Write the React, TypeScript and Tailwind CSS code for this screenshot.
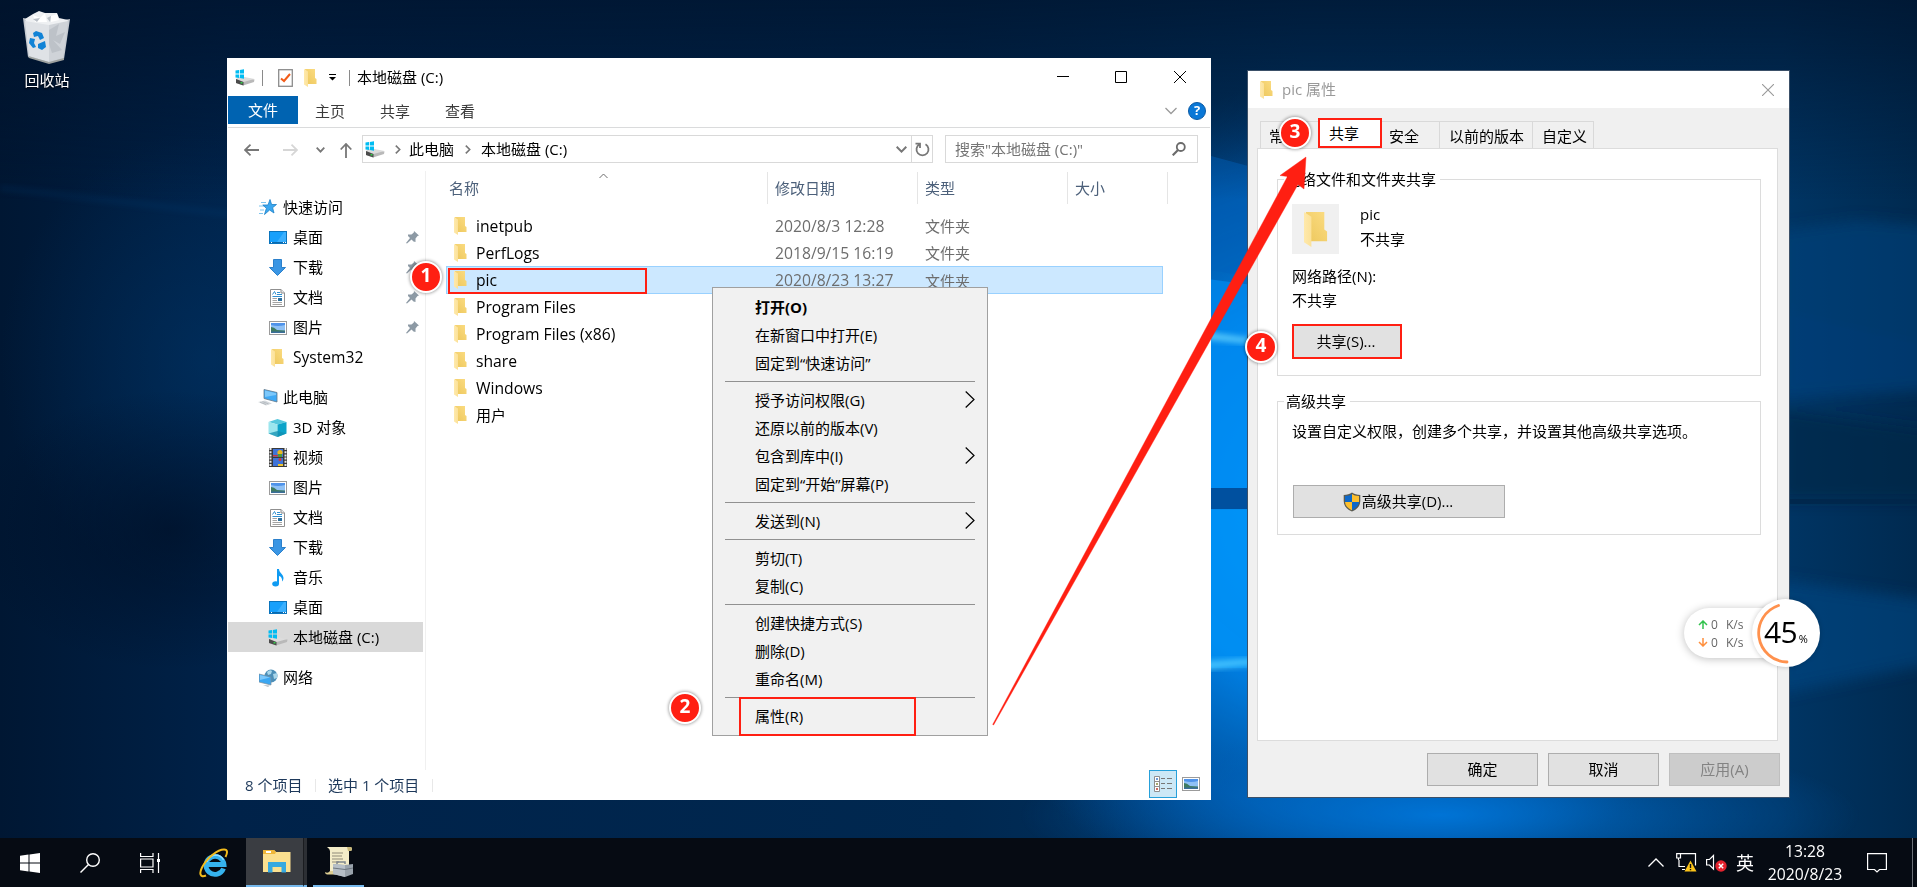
import type { ReactNode } from 'react';
import clsx from 'clsx';

interface IconProps {
  className?: string;
}

/* ---------- Icons ---------- */

function FolderIcon({ className = 'w-[13px] h-[18px]' }: IconProps) {
  return (
    <svg className={className} viewBox="0 0 26 36" preserveAspectRatio="none">
      <defs>
        <linearGradient id="folderBack" x1="0" y1="1" x2="1" y2="0">
          <stop offset="0" stopColor="#edc75c" />
          <stop offset="1" stopColor="#fbdc82" />
        </linearGradient>
        <linearGradient id="folderFront" x1="0" y1="0" x2="1" y2="0">
          <stop offset="0" stopColor="#ffe9ab" />
          <stop offset="1" stopColor="#fbe199" />
        </linearGradient>
      </defs>
      <path d="M2 0H22V18L25 20V30H6Z" fill="url(#folderBack)" />
      <path d="M0 0L8 5V36L0 31Z" fill="url(#folderFront)" />
    </svg>
  );
}

function DriveIcon({ className }: IconProps) {
  return (
    <svg className={clsx('w-5 h-[17px] shrink-0', className)} viewBox="0 0 20 17">
      <path d="M1 10L6 8L19.500 10.500L19 13L8 16.500L1 14Z" fill="#b9b9b9" />
      <path d="M1 10L7 7.500L19.500 10L8.500 13Z" fill="#dcdcdc" />
      <path d="M1 10L8.500 13V16.500L1 14Z" fill="#4b4b4b" />
      <rect x="5.500" y="13" width="2" height="1.500" fill="#35d04a" />
      <path d="M0.500 1.500L4 1V4.500H0.500ZM4.800 0.900L9 0.300V4.500H4.800ZM0.500 5.400H4V9L0.500 8.500ZM4.800 5.400H9V9.700L4.800 9.100Z" fill="#00bcf2" />
    </svg>
  );
}

function StarIcon() {
  return (
    <svg className="w-[18px] h-[17px]" viewBox="0 0 18 17">
      <path d="M2 3.500H7M0 7H5M1 11H5M0 14.500H4" stroke="#7cc4ee" strokeWidth="1" />
      <path d="M11 0.500L12.600 5.500H17.500L13.600 8.700L15 14L10.600 11L5.500 15.500L7.400 9.300L3.800 6H9Z" fill="#3ba7ef" stroke="#1b7fc6" strokeWidth=".8" />
    </svg>
  );
}

function DesktopIcon() {
  return (
    <svg className="w-[18px] h-[13px]" viewBox="0 0 18 13">
      <rect x=".5" y=".5" width="17" height="12" fill="#18a0fb" stroke="#0a74bd" />
      <path d="M8 11L15 1H17V11Z" fill="#3bb0ff" />
      <path d="M1 11.500H17" stroke="#0b69ac" />
      <path d="M2 11.500H3M14 11.500H15M16 11.500H17" stroke="#fff" />
    </svg>
  );
}

function DownloadIcon() {
  return (
    <svg className="w-[17px] h-[17px]" viewBox="0 0 17 17">
      <path d="M4.500 .5H12.500V8.500H16.500L8.500 16.500L.5 8.500H4.500Z" fill="#3a96e4" stroke="#2b80cb" />
    </svg>
  );
}

function DocumentIcon() {
  return (
    <svg className="w-[15px] h-[18px]" viewBox="0 0 15 18">
      <path d="M.5 .5H11L14.500 4V17.500H.5Z" fill="#fff" stroke="#8f8f8f" />
      <path d="M11 .5V4H14.500" fill="#e6e6e6" stroke="#8f8f8f" />
      <path d="M2.500 5.500L4.500 2.500L6 5.500M7 3.500H10M2.500 7.500H12M7 5.500H12" stroke="#2f8fd0" fill="none" />
      <path d="M2.500 9.500H7M2.500 11.500H7M2.500 13.500H12M2.500 15.500H12" stroke="#a3a3a3" />
      <rect x="8" y="9" width="4" height="3" fill="#2c6f9f" />
    </svg>
  );
}

function PictureIcon() {
  return (
    <svg className="w-[18px] h-[14px]" viewBox="0 0 18 14">
      <rect x=".5" y=".5" width="17" height="13" fill="#fff" stroke="#9b9b9b" />
      <rect x="2" y="2" width="14" height="10" fill="#8fc1f5" />
      <path d="M2 2H16V4Q9 6 2 4Z" fill="#4f93ea" />
      <path d="M2 6Q5 6 8 9L16 9.500V12H2Z" fill="#3f7b62" />
      <path d="M2 10.500H16V12H2Z" fill="#3b6e9b" />
    </svg>
  );
}

function ComputerIcon() {
  return (
    <svg className="w-5 h-[17px]" viewBox="0 0 20 17">
      <path d="M6 .5L19 3.500V13L6 9.500Z" fill="#3fa9f5" stroke="#63788a" strokeWidth=".8" />
      <path d="M7 1.500L18 4.200V6L7 8Z" fill="#7cc8fb" />
      <path d="M0 13L7 11.500L14 14.500L8 16.500Z" fill="#d4d8dc" />
      <path d="M2 13.200L8 15.500M4.500 12.600L10.500 14.900" stroke="#a9b0b6" strokeWidth=".7" />
    </svg>
  );
}

function CubeIcon() {
  return (
    <svg className="w-[19px] h-[18px]" viewBox="0 0 19 18">
      <path d="M9.500 0L18.500 3L9.500 5.500L.5 3Z" fill="#57c8dd" />
      <path d="M.5 3L9.500 5.500V18L.5 14.500Z" fill="#9be6ee" />
      <path d="M18.500 3L9.500 5.500V18L18.500 14.500Z" fill="#0ca3c9" />
      <path d="M.5 14.500L9.500 12L18.500 14.500L9.500 18Z" fill="#128fb0" opacity=".75" />
    </svg>
  );
}

function VideoIcon() {
  return (
    <svg className="w-[18px] h-[19px]" viewBox="0 0 18 19">
      <rect width="18" height="19" fill="#3a3a3a" />
      <path d="M1.500 0V19M16.500 0V19" stroke="#e8e8e8" strokeWidth="2" strokeDasharray="2 1.200" />
      <rect x="4" y="1" width="10" height="8" fill="#3f73d8" />
      <rect x="4" y="10" width="10" height="8" fill="#3f73d8" />
      <circle cx="11" cy="4.500" r="2.600" fill="#e9b71f" />
      <path d="M4 7H10V8.500H4Z" fill="#c93a3a" />
      <path d="M9 6H13V9H9Z" fill="#4b9b3d" />
      <circle cx="11" cy="11.500" r="1.500" fill="#d33b30" />
      <path d="M9 16H14V18H9Z" fill="#f0c52d" />
    </svg>
  );
}

function MusicIcon() {
  return (
    <svg className="w-3 h-[18px]" viewBox="0 0 12 18">
      <ellipse cx="3.600" cy="14.800" rx="3.400" ry="2.600" fill="#0f9bf2" />
      <path d="M5 0H7C7 4 11.500 5 11.500 9C11.500 11 10.500 12 10 12.500C10.500 9 9 7.500 7 7V15H5Z" fill="#0f9bf2" />
    </svg>
  );
}

function NetworkIcon() {
  return (
    <svg className="w-[19px] h-[18px]" viewBox="0 0 19 18">
      <circle cx="12" cy="7" r="6.500" fill="#4c8fb8" />
      <path d="M8 3Q11 0 13 2L12 5L9 6ZM14 5L18 4V9L15 10Z" fill="#a9d6ea" />
      <path d="M0 5L12 8V16L0 13Z" fill="#3ba7f2" stroke="#7d8e9b" strokeWidth=".7" />
      <path d="M1 6L11 8.500L1 11Z" fill="#7cc8fb" />
      <path d="M4 16L11 16.500L9 18Z" fill="#b9c0c6" />
    </svg>
  );
}

function PinIcon() {
  return (
    <svg className="w-[13px] h-[13px]" viewBox="0 0 13 13">
      <path d="M8 0L13 4.500L11.500 5L9.500 7.500V11L7.500 10.500L5.500 8.500L1 12.500L0 12L4 7L2 5L2 3.500H5.500L7.800 1.500Z" fill="#8d9aa5" />
    </svg>
  );
}

function ShieldIcon() {
  return (
    <svg className="w-[18px] h-5" viewBox="0 0 18 20">
      <path d="M9 .5C11 2 14 3 17.300 3V9C17.300 14 14 17.500 9 19.500C4 17.500 .7 14 .7 9V3C4 3 7 2 9 .5Z" fill="#5a5a50" />
      <path d="M9 2V10H2V4C5 4 7.500 3.200 9 2ZM9 10H16C15.600 14 13 16.600 9 18.200Z" fill="#0d68c9" />
      <path d="M9 2V10H16V4C13 4 10.500 3.200 9 2ZM9 10H2C2.400 14 5 16.600 9 18.200Z" fill="#fdbf2d" />
    </svg>
  );
}

function RecycleBinIcon() {
  return (
    <svg className="w-12 h-[54px]" viewBox="0 0 48 54">
      <path d="M0 8L26 13L47 9L41 49L26 53L5 47Z" fill="#c5cad0" />
      <path d="M2 9L10 4L16 1L22 3L34 3L36 8L45 10L42 16L26 20L4 13Z" fill="#eef0f2" />
      <path d="M2 11L26 15V52L6 46Z" fill="#dfe2e6" />
      <path d="M26 15L45 11L40 48L26 52Z" fill="#cfd3d8" />
      <path d="M26 20L36 14L33 26L42 22L37 34L30 30L39 40L29 43L26 34Z" fill="#b5bbc2" opacity=".7" />
      <path d="M10 5L17 8L22 3L24 12L12 12ZM28 6L34 4L36 10L28 12Z" fill="#fff" />
      <path d="M10 9L17 8L14 12ZM24 8L28 6L27 12Z" fill="#b9bfc6" />
      <path d="M5 46L26 52L41 48V50L26 54L6 48Z" fill="#9ea29f" />
      <path d="M10 23L13 21L19 23L21 28L17 30L15 26L11 27ZM7 28L12 29L11 33L13 37L10 38L6 33ZM15 34L22 31L23 37L19 40L15 38Z" fill="#1183d6" />
    </svg>
  );
}

function WinLogo() {
  return (
    <svg className="w-5 h-5" viewBox="0 0 20 20">
      <path d="M0 2.800L8.500 1.600V9.500H0ZM9.500 1.400L20 0V9.500H9.500ZM0 10.500H8.500V18.400L0 17.200ZM9.500 10.500H20V20L9.500 18.600Z" fill="#fff" />
    </svg>
  );
}

function IEIcon() {
  return (
    <svg className="w-[30px] h-[30px]" viewBox="0 0 30 30" fill="none">
      <path d="M24.500 20.500A9 9 0 1 1 25 16.500H9" stroke="#35b3ee" strokeWidth="4.800" />
      <path d="M8 14Q10 8 16 7Q22 7 24.500 12" stroke="#8fdcff" strokeWidth="1.400" />
      <path d="M7 27.500C1 30 0 25.500 3 19.500C8 9.500 19 1.500 25 1.500C29 1.500 28.500 5 26.500 9" stroke="#f3bc1c" strokeWidth="2" />
    </svg>
  );
}

function ExplorerIcon() {
  return (
    <svg className="w-7 h-[23px]" viewBox="0 0 28 23">
      <path d="M0 0H11L13 2H27.500V22H0Z" fill="#fbe08f" />
      <path d="M0 0H11L13 2L12 4H0Z" fill="#efb73a" />
      <rect x="3" y="1" width="5" height="2" fill="#fff" />
      <path d="M5 12H23V22.500H18.500V17H9.500V22.500H5Z" fill="#36a9e0" />
    </svg>
  );
}

function ServerManagerIcon() {
  return (
    <svg className="w-7 h-[30px]" viewBox="0 0 28 30">
      <path d="M2 0H26Q28 2 26 4L24 4V24H5V4Q5 2 2 0Z" fill="#f3ecc8" />
      <path d="M22 0H26Q28 2 26 4H23Z" fill="#c8b878" />
      <path d="M0 25Q3 27 5 24H14V27.500H2Q0 27 0 25Z" fill="#dccd92" />
      <path d="M7 6H18M7 9H17M7 12H18M7 15H14" stroke="#8f8a78" strokeWidth="1.200" />
      <path d="M12 17V15H20V17" stroke="#7f868d" strokeWidth="1.500" fill="none" />
      <path d="M8 17L20 18L28 17V27L20 30L8 27Z" fill="#98a2ab" />
      <path d="M8 17L20 18V30L8 27Z" fill="#b6bfc7" />
      <path d="M8 21L20 22.500L28 21" stroke="#6e777f" fill="none" />
    </svg>
  );
}

interface StrokeProps {
  d: string;
  className: string;
  viewBox: string;
  width?: number;
}

function Stroke({ d, className, viewBox, width = 1 }: StrokeProps) {
  return (
    <svg className={className} viewBox={viewBox} fill="none" stroke="currentColor" strokeWidth={width}>
      <path d={d} />
    </svg>
  );
}

/* ---------- Data ---------- */

interface NavItem {
  label: string;
  icon: ReactNode;
  root?: boolean;
  pinned?: boolean;
  active?: boolean;
  spaced?: boolean;
}

const navItems: NavItem[] = [
  { label: '快速访问', icon: <StarIcon />, root: true },
  { label: '桌面', icon: <DesktopIcon />, pinned: true },
  { label: '下载', icon: <DownloadIcon />, pinned: true },
  { label: '文档', icon: <DocumentIcon />, pinned: true },
  { label: '图片', icon: <PictureIcon />, pinned: true },
  { label: 'System32', icon: <FolderIcon /> },
  { label: '此电脑', icon: <ComputerIcon />, root: true, spaced: true },
  { label: '3D 对象', icon: <CubeIcon /> },
  { label: '视频', icon: <VideoIcon /> },
  { label: '图片', icon: <PictureIcon /> },
  { label: '文档', icon: <DocumentIcon /> },
  { label: '下载', icon: <DownloadIcon /> },
  { label: '音乐', icon: <MusicIcon /> },
  { label: '桌面', icon: <DesktopIcon /> },
  { label: '本地磁盘 (C:)', icon: <DriveIcon />, active: true },
  { label: '网络', icon: <NetworkIcon />, root: true, spaced: true },
];

const files = [
  { name: 'inetpub', date: '2020/8/3 12:28', type: '文件夹' },
  { name: 'PerfLogs', date: '2018/9/15 16:19', type: '文件夹' },
  { name: 'pic', date: '2020/8/23 13:27', type: '文件夹', selected: true },
  { name: 'Program Files', date: '', type: '' },
  { name: 'Program Files (x86)', date: '', type: '' },
  { name: 'share', date: '', type: '' },
  { name: 'Windows', date: '', type: '' },
  { name: '用户', date: '', type: '' },
];

interface MenuEntry {
  label: string;
  bold?: boolean;
  submenu?: boolean;
}

const menuGroups: MenuEntry[][] = [
  [{ label: '打开(O)', bold: true }, { label: '在新窗口中打开(E)' }, { label: '固定到“快速访问”' }],
  [
    { label: '授予访问权限(G)', submenu: true },
    { label: '还原以前的版本(V)' },
    { label: '包含到库中(I)', submenu: true },
    { label: '固定到“开始”屏幕(P)' },
  ],
  [{ label: '发送到(N)', submenu: true }],
  [{ label: '剪切(T)' }, { label: '复制(C)' }],
  [{ label: '创建快捷方式(S)' }, { label: '删除(D)' }, { label: '重命名(M)' }],
  [{ label: '属性(R)' }],
];

/* ---------- Desktop ---------- */

function Wallpaper() {
  return (
    <svg className="absolute inset-0 w-full h-full" viewBox="0 0 1917 887" preserveAspectRatio="none">
      <defs>
        <linearGradient id="base" x1="0" y1="0" x2="1" y2="0">
          <stop offset="0" stopColor="#001733" />
          <stop offset=".12" stopColor="#002249" />
          <stop offset=".5" stopColor="#002850" />
          <stop offset=".68" stopColor="#003463" />
          <stop offset=".93" stopColor="#003564" />
          <stop offset="1" stopColor="#002a50" />
        </linearGradient>
        <radialGradient id="glow" gradientUnits="userSpaceOnUse" cx="1340" cy="500" r="420">
          <stop offset="0" stopColor="#009dff" />
          <stop offset=".45" stopColor="#0085ec" stopOpacity=".95" />
          <stop offset=".75" stopColor="#0064c0" stopOpacity=".7" />
          <stop offset="1" stopColor="#004a92" stopOpacity="0" />
        </radialGradient>
        <linearGradient id="topShade" x1="0" y1="0" x2="0" y2="1">
          <stop offset="0" stopColor="#00122a" stopOpacity=".7" />
          <stop offset="1" stopColor="#00122a" stopOpacity="0" />
        </linearGradient>
        <radialGradient id="leftBeam" cx=".5" cy=".5" r=".5">
          <stop offset="0" stopColor="#003a70" stopOpacity=".45" />
          <stop offset="1" stopColor="#003a70" stopOpacity="0" />
        </radialGradient>
        <radialGradient id="leftDark" cx=".5" cy=".5" r=".5">
          <stop offset="0" stopColor="#000c20" stopOpacity=".6" />
          <stop offset="1" stopColor="#000c20" stopOpacity="0" />
        </radialGradient>
        <radialGradient id="bottomGlow" cx=".5" cy=".5" r=".5">
          <stop offset="0" stopColor="#0074d6" />
          <stop offset="1" stopColor="#0060b8" stopOpacity="0" />
        </radialGradient>
        <filter id="soft">
          <feGaussianBlur stdDeviation="3" />
        </filter>
        <filter id="wide">
          <feGaussianBlur stdDeviation="7" />
        </filter>
      </defs>
      <rect width="1917" height="887" fill="url(#base)" />
      <ellipse cx="210" cy="360" rx="210" ry="230" fill="url(#leftBeam)" />
      <ellipse cx="170" cy="530" rx="200" ry="140" fill="url(#leftDark)" />
      <path d="M0 186L230 212V216L0 190Z" fill="#0a4a88" opacity=".25" filter="url(#soft)" />
      <g filter="url(#wide)">
        <path d="M1780 230L1860 220L1930 226V340L1780 306Z" fill="#004584" opacity=".5" />
        <path d="M1780 306L1930 340V390L1780 400Z" fill="#00488a" opacity=".5" />
        <path d="M1780 410L1930 430V500H1780Z" fill="#002444" opacity=".6" />
        <path d="M1780 580L1930 600V664L1780 694Z" fill="#004a8c" opacity=".5" />
      </g>
      <rect width="1917" height="887" fill="url(#glow)" />
      <ellipse cx="1440" cy="815" rx="420" ry="85" fill="url(#bottomGlow)" />
      <path d="M1211 156L1248 166V277L1211 270Z" fill="#0062bd" opacity=".6" />
      <path d="M1200 278L1260 286V488H1200Z" fill="#008ef5" opacity=".65" />
      <path d="M1200 510H1260V668H1200Z" fill="#0096fa" opacity=".6" />
      <path d="M1200 332L1260 340V344L1200 338Z" fill="#70dcff" filter="url(#soft)" />
      <path d="M1200 662L1260 658V664L1200 670Z" fill="#4cc8ff" filter="url(#soft)" />
      <rect x="1205" y="488" width="50" height="21" fill="#00509f" />
      <rect x="1785" y="499" width="132" height="5" fill="#00264a" opacity=".8" />
      <rect width="1917" height="200" fill="url(#topShade)" />
    </svg>
  );
}

/* ---------- File explorer ---------- */

function ExplorerWindow() {
  return (
    <section className="absolute left-[227px] top-[58px] w-[984px] h-[742px] bg-white flex flex-col">
      <TitleBar />
      <RibbonTabs />
      <AddressRow />
      <div className="flex flex-1 min-h-0">
        <NavPane />
        <FileList />
      </div>
      <StatusBar />
    </section>
  );
}

function TitleBar() {
  return (
    <header className="flex items-center h-[38px] pl-2 pt-px shrink-0">
      <DriveIcon />
      <span className="w-px h-4 bg-[#8a8a8a] ml-[7px]" />
      <svg className="w-[15px] h-[18px] ml-[15px]" viewBox="0 0 15 18">
        <rect x=".7" y=".7" width="13.600" height="16.600" fill="#fff" stroke="#8c8c8c" strokeWidth="1.300" />
        <path d="M3 9.500L6 12L12 5" fill="none" stroke="#f25c19" strokeWidth="2" />
      </svg>
      <span className="ml-[11px]">
        <FolderIcon />
      </span>
      <svg className="w-[7px] h-[7px] ml-3" viewBox="0 0 7 7">
        <path d="M0 .5H7" stroke="#000" />
        <path d="M0 3H7L3.500 6.500Z" />
      </svg>
      <span className="w-px h-4 bg-[#8a8a8a] ml-[13px]" />
      <span className="ml-[7px]">本地磁盘 (C:)</span>
      <div className="flex items-center ml-auto text-black pr-[25px] pb-px">
        <Stroke className="w-3 h-3" viewBox="0 0 12 12" d="M0 5.500H12" />
        <Stroke className="w-3 h-3 ml-[46px]" viewBox="0 0 12 12" d="M.5 .5H11.500V11.500H.5Z" />
        <Stroke className="w-3 h-3 ml-[47px]" viewBox="0 0 12 12" d="M0 0L12 12M12 0L0 12" />
      </div>
    </header>
  );
}

function RibbonTabs() {
  return (
    <nav className="flex h-8 mx-px border-b border-[#dadbdc] text-[#3b3b3b] shrink-0">
      <span className="flex items-center justify-center w-[70px] h-7 bg-[#0063b1] text-white">文件</span>
      <span className="flex items-center ml-[17px] w-[65px]">主页</span>
      <span className="flex items-center w-[65px]">共享</span>
      <span className="flex items-center w-[65px]">查看</span>
      <div className="flex items-center ml-auto pr-[4px] pb-0.5 text-[#9a9a9a]">
        <Stroke className="w-3 h-2 mr-[11px]" viewBox="0 0 12 8" d="M.5 1L6 6.500L11.500 1" width={1.3} />
        <span className="flex items-center justify-center w-[18px] h-[18px] rounded-full bg-[#0a78d7] border border-[#0a5aa5] text-white text-[13px] font-bold leading-none">
          ?
        </span>
      </div>
    </nav>
  );
}

function AddressRow() {
  return (
    <div className="flex h-[43px] pt-[7px] pl-[17px] pr-[13px] shrink-0 text-[#777]">
      <div className="flex items-center h-[30px] w-[118px] shrink-0">
        <Stroke className="w-[15px] h-3" viewBox="0 0 15 12" d="M15 6H1M6.500 .7L1 6L6.500 11.300" width={1.8} />
        <Stroke className="w-[15px] h-3 ml-6 text-[#d6d6d6]" viewBox="0 0 15 12" d="M0 6H14M8.500 .7L14 6L8.500 11.300" width={1.8} />
        <Stroke className="w-[9px] h-[6px] ml-[18px]" viewBox="0 0 9 6" d="M.7 .7L4.500 4.600L8.300 .7" width={1.8} />
        <Stroke className="w-3 h-[15px] ml-[15px]" viewBox="0 0 12 15" d="M6 15V1M.7 6.500L6 1L11.300 6.500" width={1.8} />
      </div>
      <div className="flex items-center h-7 w-[571px] border border-[#d9d9d9] shrink-0">
        <DriveIcon className="ml-0.5" />
        <Stroke className="w-[6px] h-[9px] ml-[10px]" viewBox="0 0 6 9" d="M.8 .6L4.700 4.500L.8 8.400" width={1.6} />
        <span className="ml-2 text-black">此电脑</span>
        <Stroke className="w-[6px] h-[9px] ml-[11px]" viewBox="0 0 6 9" d="M.8 .6L4.700 4.500L.8 8.400" width={1.6} />
        <span className="ml-[10px] text-black">本地磁盘 (C:)</span>
        <Stroke className="w-[11px] h-[7px] ml-auto" viewBox="0 0 11 7" d="M.7 .7L5.500 5.600L10.300 .7" width={2} />
        <span className="flex items-center justify-center w-[21px] h-full ml-1 border-l border-[#d9d9d9]">
          <Stroke className="w-[15px] h-[15px]" viewBox="0 0 15 15" d="M4.500 2.200A6 6 0 1 0 10.500 2.200M.5 1.700H5V6" width={1.8} />
        </span>
      </div>
      <div className="flex items-center h-7 flex-1 ml-3 pl-[9px] pr-[11px] border border-[#d9d9d9] text-[#757575]">
        <span>搜索"本地磁盘 (C:)"</span>
        <svg className="w-[14px] h-[14px] ml-auto" viewBox="0 0 14 14" fill="none" stroke="#6b6b6b" strokeWidth="1.800">
          <circle cx="8.800" cy="5" r="4" />
          <path d="M6 8L.7 13.300" strokeWidth="2.200" />
        </svg>
      </div>
    </div>
  );
}

function NavPane() {
  return (
    <aside className="w-[199px] border-r border-[#f0f0f0] pl-px pr-[2px] pt-[21px] shrink-0 text-black">
      {navItems.map((item, i) => (
        <div
          key={i}
          className={clsx(
            'flex items-center h-[30px] pt-px',
            item.spaced && 'mt-[10px]',
            item.root ? 'pl-[30px]' : 'pl-[39px]',
            item.active && 'bg-[#d9d9d9]',
          )}
        >
          <span className={clsx('flex justify-center shrink-0', item.root ? 'w-5' : 'w-[21px]')}>{item.icon}</span>
          <span
            className={clsx(
              item.root ? 'ml-[5px]' : 'ml-[5px]',
              item.label === 'System32' && 'text-[15.600px]',
            )}
          >
            {item.label}
          </span>
          {item.pinned && (
            <span className="ml-auto mr-[4px]">
              <PinIcon />
            </span>
          )}
        </div>
      ))}
    </aside>
  );
}

function FileList() {
  return (
    <div className="flex-1 pl-5">
      <div className="flex h-8 text-[#4c607a] mt-px">
        <div className="relative flex items-center w-[322px] pl-[3px] border-r border-[#e5e5e5]">
          名称
          <Stroke className="absolute left-[153px] top-px w-[9px] h-[6px] text-[#6d6d6d]" viewBox="0 0 9 6" d="M.5 5L4.500 1L8.500 5" />
        </div>
        <div className="flex items-center w-[150px] pl-[7px] border-r border-[#e5e5e5]">修改日期</div>
        <div className="flex items-center w-[150px] pl-[7px] border-r border-[#e5e5e5]">类型</div>
        <div className="flex items-center w-[100px] pl-[7px] border-r border-[#e5e5e5]">大小</div>
      </div>
      <div className="mt-2 w-[717px]">
        {files.map((file) => (
          <div
            key={file.name}
            className={clsx(
              'flex items-center border',
              file.selected ? 'h-7 -mb-px bg-[#cce8ff] border-[#99d1ff]' : 'h-[27px] border-transparent',
            )}
          >
            <span className="w-[29px] pl-[7px]">
              <FolderIcon />
            </span>
            <span className={clsx('w-[299px] pt-0.5 text-black', file.name !== '用户' && 'text-[15.700px]')}>
              {file.name}
            </span>
            <span className="w-[150px] pt-0.5 text-[15.700px] text-[#6d6d6d]">{file.date}</span>
            <span className="pt-0.5 text-[#6d6d6d]">{file.type}</span>
          </div>
        ))}
      </div>
    </div>
  );
}

function StatusBar() {
  return (
    <footer className="flex items-center h-[30px] pl-[18px] pr-[11px] text-[#1e395b] shrink-0">
      <span className="w-[70px]">8 个项目</span>
      <span className="w-px h-[13px] bg-[#e8e8e8]" />
      <span className="w-[104px] ml-3">选中 1 个项目</span>
      <span className="w-px h-[13px] bg-[#e8e8e8]" />
      <span className="flex items-center justify-center w-7 h-7 ml-auto mb-0.5 bg-[#cce8f6] border border-[#26a0da]">
        <svg className="w-[18px] h-4" viewBox="0 0 18 16">
          <path d="M.5 .5H5.500V15.500H.5ZM.5 5.500H5.500M.5 10.500H5.500" fill="#fff" stroke="#8f8f8f" />
          <path d="M2 3H4" stroke="#3c78c8" strokeWidth="1.500" />
          <path d="M2 8H4" stroke="#8a8a3c" strokeWidth="1.500" />
          <path d="M2 13H4" stroke="#c0392b" strokeWidth="1.500" />
          <path d="M7 2.500H11M13 2.500H18M7 7.500H11M13 7.500H18M7 12.500H11M13 12.500H18" stroke="#777" />
        </svg>
      </span>
      <span className="ml-[5px] mb-0.5">
        <PictureIcon />
      </span>
    </footer>
  );
}

/* ---------- Context menu ---------- */

function ContextMenu() {
  return (
    <div className="absolute left-[712px] top-[287px] w-[276px] h-[449px] pt-[5px] bg-[#f1f1f1] border border-[#a0a0a0] text-black">
      {menuGroups.map((group, i) => (
        <div key={i}>
          {i > 0 && <div className="h-px mx-3 my-1 bg-[#919191]" />}
          {group.map((entry) => (
            <div key={entry.label} className="flex items-center h-7 pl-[42px] pr-[12px]">
              <span className={clsx(entry.bold && 'font-bold')}>{entry.label}</span>
              {entry.submenu && (
                <Stroke className="w-[10px] h-[17px] ml-auto -mt-0.5" viewBox="0 0 10 17" d="M.7 .5L9 8.500L.7 16.500" width={1.2} />
              )}
            </div>
          ))}
        </div>
      ))}
    </div>
  );
}

/* ---------- Properties dialog ---------- */

function DialogButton({ label, disabled = false }: { label: string; disabled?: boolean }) {
  return (
    <button
      className={clsx(
        'w-[111px] h-[33px] border',
        disabled ? 'bg-[#cccccc] border-[#bfbfbf] text-[#838383]' : 'bg-[#e1e1e1] border-[#adadad] text-black',
      )}
    >
      {label}
    </button>
  );
}

function PropertiesDialog() {
  return (
    <section className="absolute left-[1247px] top-[70px] w-[543px] h-[728px] bg-[#f0f0f0] border border-[#3b5068] flex flex-col text-black">
      <header className="flex items-center h-[37px] pl-3 pr-[15px] bg-white text-[#999] shrink-0">
        <FolderIcon />
        <span className="ml-[9px]">pic 属性</span>
        <Stroke className="w-3 h-3 ml-auto" viewBox="0 0 12 12" d="M0 0L12 12M12 0L0 12" width={1.1} />
      </header>

      <div className="flex h-10 pt-[13px] pl-3 shrink-0">
        <span className="flex items-center w-[58px] pl-2 border border-r-0 border-b-0 border-[#d9d9d9] pt-0.5">常规</span>
        <span className="w-16 -mt-[3px] bg-white" />
        <span className="flex items-center w-[58px] pl-[7px] border border-l-0 border-b-0 border-[#d9d9d9] pt-0.5">安全</span>
        <span className="flex items-center w-[93px] pl-[9px] border border-l-0 border-b-0 border-[#d9d9d9] pt-0.5">以前的版本</span>
        <span className="flex items-center w-[61px] pl-[9px] border border-l-0 border-b-0 border-[#d9d9d9] pt-0.5">自定义</span>
      </div>

      <div className="h-[593px] ml-[9px] mr-[11px] pt-[30px] pl-[19px] pr-4 bg-white border border-[#dcdcdc] shrink-0">
        <div className="h-[197px] pl-[14px] border border-[#dcdcdc]">
          <div className="-mt-[9px] -ml-2 h-4 w-[156px] pl-[2px] bg-white flex items-center">网络文件和文件夹共享</div>
          <div className="flex mt-[17px]">
            <span className="flex items-center justify-center w-[47px] h-[50px] bg-[#f0f0f0]">
              <FolderIcon className="w-6 h-[35px]" />
            </span>
            <div className="ml-[21px]">
              <div className="h-[21px] flex items-center">pic</div>
              <div className="h-7 flex items-center">不共享</div>
            </div>
          </div>
          <div className="h-6 mt-[10px] flex items-center">网络路径(N):</div>
          <div className="h-6 flex items-center">不共享</div>
          <button className="block w-[110px] h-[35px] mt-3 pr-0.5 bg-[#e1e1e1] border border-[#adadad]">共享(S)...</button>
        </div>

        <div className="h-[134px] mt-[25px] pl-[14px] border border-[#dcdcdc]">
          <div className="-mt-[9px] -ml-2 h-4 w-[66px] pl-[2px] bg-white flex items-center">高级共享</div>
          <div className="h-6 mt-[10px] flex items-center">设置自定义权限，创建多个共享，并设置其他高级共享选项。</div>
          <button className="flex items-center justify-center w-[212px] h-[33px] mt-[42px] ml-px pr-0.5 bg-[#e1e1e1] border border-[#adadad]">
            <ShieldIcon />
            <span className="ml-px">高级共享(D)...</span>
          </button>
        </div>
      </div>

      <footer className="flex justify-end gap-[10px] pt-3 pr-[9px]">
        <DialogButton label="确定" />
        <DialogButton label="取消" />
        <DialogButton label="应用(A)" disabled />
      </footer>
    </section>
  );
}

/* ---------- Annotations ---------- */

function StepBadge({ step, className }: { step: number; className: string }) {
  return (
    <span
      className={clsx(
        'absolute flex items-center justify-center w-8 h-8 rounded-full bg-[#ff1f12] border-2 border-white text-white text-[19px] font-bold leading-none pb-[3px] shadow-[0_0_3px_1px_rgba(0,0,0,0.3)]',
        className,
      )}
    >
      {step}
    </span>
  );
}

function Annotations() {
  return (
    <>
      <span className="absolute left-[448px] top-[268px] w-[199px] h-[26px] border-2 border-[#ff1f12]" />
      <span className="absolute left-[739px] top-[697px] w-[177px] h-[39px] border-2 border-[#ff1f12]" />
      <span className="absolute left-[1318px] top-[118px] w-16 h-[30px] border-2 border-[#ff1f12] bg-white text-black flex items-center pl-[9px] pt-px">
        共享
      </span>
      <span className="absolute left-[1292px] top-[324px] w-[110px] h-[35px] border-2 border-[#ff1f12]" />
      <svg className="absolute left-[985px] top-[150px] w-[330px] h-[580px]" viewBox="985 150 330 580">
        <path d="M992.700 724.500L1287.500 176.500L1280 175.500L1306 157L1304 189L1298 184.500L993.600 725Z" fill="#ff1f12" stroke="#ff1f12" strokeWidth=".4" />
      </svg>
      <StepBadge step={1} className="left-[410px] top-[261px]" />
      <StepBadge step={2} className="left-[669px] top-[692px]" />
      <StepBadge step={3} className="left-[1279px] top-[117px]" />
      <StepBadge step={4} className="left-[1245px] top-[331px]" />
    </>
  );
}

/* ---------- Speed widget ---------- */

function SpeedWidget() {
  return (
    <div className="absolute left-[1684px] top-[599px] w-[136px] h-[68px] flex items-center">
      <div className="w-[110px] h-[50px] pl-[14px] pt-px rounded-l-full bg-white shadow-[0_1px_8px_rgba(0,0,0,0.25)] flex flex-col justify-center text-xs leading-none text-[#666]">
        <div className="flex items-center h-[18px]">
          <Stroke className="w-[10px] h-[9px] text-[#32c24d]" viewBox="0 0 10 9" d="M5 9V1M1 5L5 1L9 5" width={1.5} />
          <span className="w-[15px] ml-[3px]">0</span>
          <span>K/s</span>
        </div>
        <div className="flex items-center h-[18px]">
          <Stroke className="w-[10px] h-[9px] text-[#ff8f3c]" viewBox="0 0 10 9" d="M5 0V8M1 4L5 8L9 4" width={1.5} />
          <span className="w-[15px] ml-[3px]">0</span>
          <span>K/s</span>
        </div>
      </div>
      <div className="relative -ml-[42px] w-[68px] h-[68px] shrink-0 rounded-full bg-white shadow-[0_0_5px_rgba(0,0,0,0.2)] text-black">
        <svg className="absolute inset-0 w-full h-full" viewBox="0 0 68 68">
          <path d="M26.500 6.500A29 29 0 0 0 35 63" fill="none" stroke="#ff914d" strokeWidth="2.800" strokeLinecap="round" />
        </svg>
        <div className="relative flex items-baseline justify-center h-full pt-[18px] leading-none">
          <span className="text-[30px] tracking-[-0.8px]">45</span>
          <span className="text-[11px] ml-0.5">%</span>
        </div>
      </div>
    </div>
  );
}

/* ---------- Taskbar ---------- */

function Taskbar() {
  return (
    <footer className="absolute inset-x-0 bottom-0 h-[49px] bg-[#060b13] flex text-white">
      <span className="flex items-center justify-center w-[60px]">
        <WinLogo />
      </span>
      <span className="flex items-center justify-center w-[60px]">
        <svg className="w-5 h-5" viewBox="0 0 20 20" fill="none" stroke="#fff" strokeWidth="1.400">
          <circle cx="13" cy="7" r="6.300" />
          <path d="M8.500 11.500L.5 19.500" />
        </svg>
      </span>
      <span className="flex items-center justify-center w-[60px]">
        <svg className="w-5 h-5" viewBox="0 0 20 20" fill="none" stroke="#fff" strokeWidth="1.200">
          <path d="M.6 0V3.500H13V0M.6 20V16.500H13V20M.6 6H13V14H.6ZM18.500 0V20" />
          <rect x="17" y="6" width="3" height="3" fill="#fff" stroke="none" />
        </svg>
      </span>
      <span className="flex items-center justify-center w-[66px] pl-0.5">
        <IEIcon />
      </span>
      <span className="flex items-center justify-center w-[57px] pl-1 bg-[#3a3d42] border-b-2 border-[#76b9ed]">
        <ExplorerIcon />
      </span>
      <span className="w-1 bg-[#2c2f34] border-l border-[#1a1c20] border-b-2 border-b-[#76b9ed]" />
      <span className="flex items-center justify-center w-[51px] ml-[6px] border-b-2 border-[#76b9ed]">
        <ServerManagerIcon />
      </span>

      <div className="flex items-center ml-auto">
        <Stroke className="w-4 h-[9px]" viewBox="0 0 16 9" d="M.5 8.500L8 1L15.500 8.500" width={1.3} />
        <svg className="w-[21px] h-[19px] ml-3" viewBox="0 0 21 19">
          <path d="M5 .7H19.500V12.500M3 7V13.500H9M6 16.500H9M.7 .7H4.500V5H.7ZM2.500 5V7" fill="none" stroke="#fff" strokeWidth="1.200" />
          <path d="M14.500 7.500L20.500 18.500H8.500Z" fill="#fcc419" />
          <path d="M14.500 11V15M14.500 16V17.200" stroke="#111" strokeWidth="1.400" />
        </svg>
        <svg className="w-[21px] h-[18px] ml-[9px]" viewBox="0 0 21 18">
          <path d="M.6 5.500H3.500L7.500 1.500V15L3.500 11H.6Z" fill="none" stroke="#fff" strokeWidth="1.200" />
          <circle cx="15" cy="12" r="5.700" fill="#e3232e" />
          <path d="M12.800 9.800L17.200 14.200M17.200 9.800L12.800 14.200" stroke="#fff" strokeWidth="1.400" />
        </svg>
        <span className="ml-[9px] text-[18px]">英</span>
        <div className="flex flex-col items-center w-[76px] ml-[13px] text-[15.700px] leading-[23px]">
          <span>13:28</span>
          <span>2020/8/23</span>
        </div>
        <Stroke className="w-5 h-5 ml-6" viewBox="0 0 20 20" d="M.6 .6H19.400V16.500H12.500L10 19L7.500 16.500H.6Z" width={1.2} />
        <span className="w-px h-[49px] ml-[25px] mr-1 bg-[#6b7078]" />
      </div>
    </footer>
  );
}

export default function App() {
  return (
    <main className="relative w-[1917px] h-[887px] overflow-hidden bg-[#00224a] font-['Open_Sans','Noto_Sans_CJK_SC',sans-serif] text-[15px] leading-none text-black whitespace-nowrap">
      <Wallpaper />
      <div className="absolute left-[23px] top-[10px] flex flex-col items-center text-white">
        <RecycleBinIcon />
        <span className="mt-[9px] [text-shadow:0_1px_2px_#000]">回收站</span>
      </div>
      <ExplorerWindow />
      <PropertiesDialog />
      <ContextMenu />
      <Annotations />
      <SpeedWidget />
      <Taskbar />
    </main>
  );
}
